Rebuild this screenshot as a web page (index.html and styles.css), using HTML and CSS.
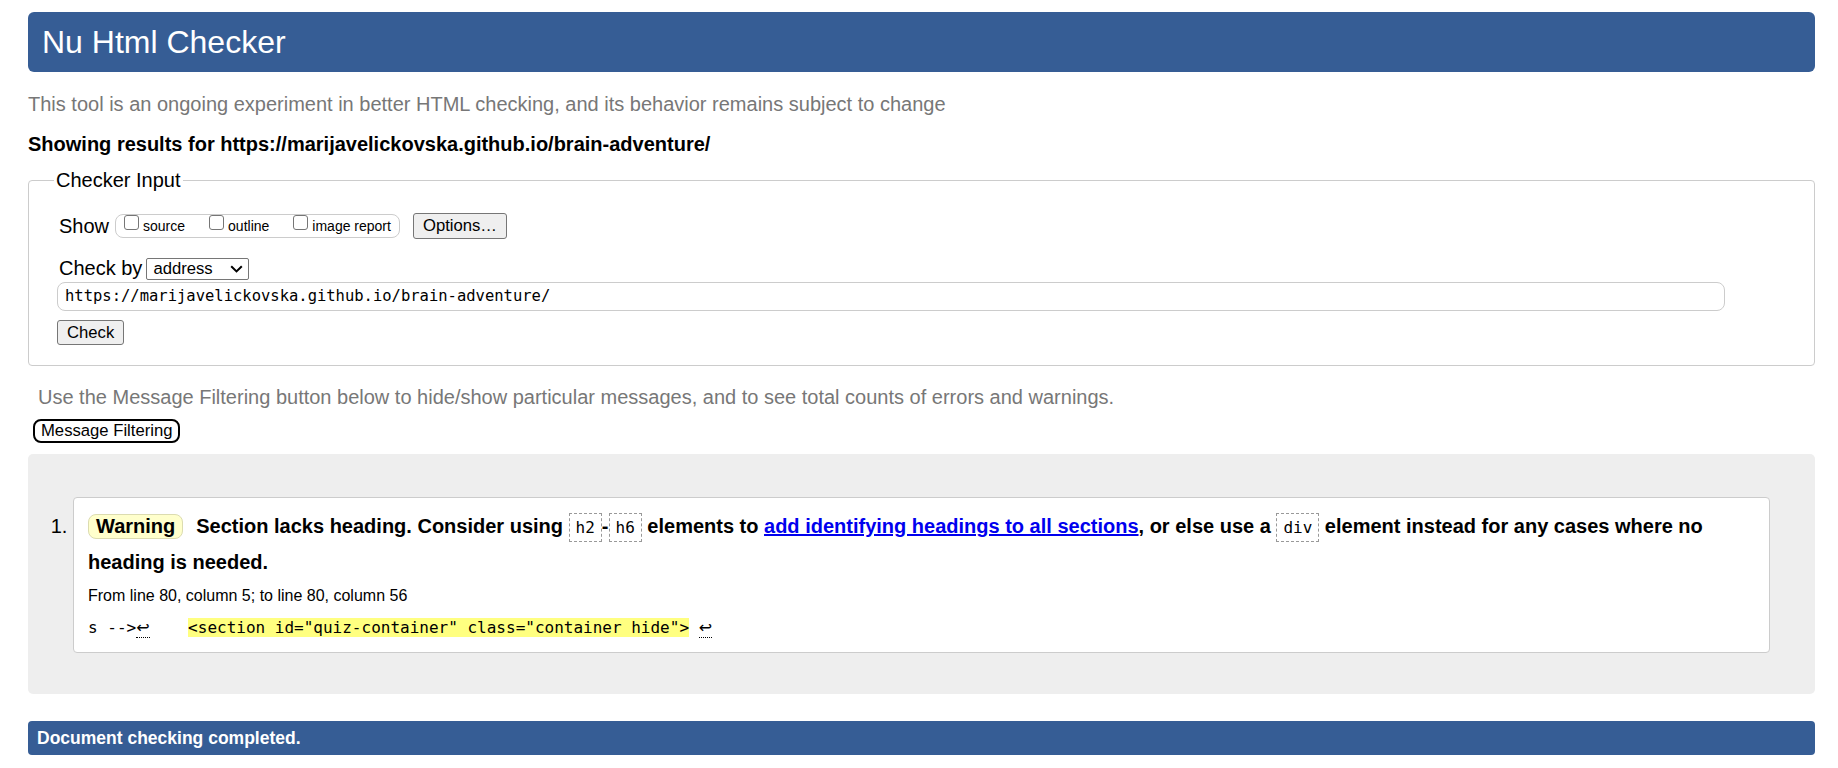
FILE: index.html
```html
<!DOCTYPE html>
<html lang="en">
<head>
<meta charset="utf-8">
<title>Showing results for https://marijavelickovska.github.io/brain-adventure/ - Nu Html Checker</title>
<link rel="stylesheet" href="styles.css">
</head>
<body>
<h1 class="title">Nu Html Checker</h1>
<p class="intro">This tool is an ongoing experiment in better HTML checking, and its behavior remains subject to change</p>
<p class="showing">Showing results for https://marijavelickovska.github.io/brain-adventure/</p>
<form class="checker">
  <fieldset class="input-set">
    <legend class="legend">Checker Input</legend>
    <div class="row show-row">
      <span class="label">Show</span>
      <span class="show-group"><label class="opt"><input type="checkbox" class="cb">source</label><label class="opt"><input type="checkbox" class="cb">outline</label><label class="opt"><input type="checkbox" class="cb">image report</label></span>
      <button type="button" class="btn options">Options…</button>
    </div>
    <div class="row checkby-row">
      <span class="label">Check by</span>
      <span class="select">address<svg class="chevron" width="13" height="8" viewBox="0 0 13 8"><path d="M1.2 1.2 L6.5 6.4 L11.8 1.2" fill="none" stroke="#000" stroke-width="2"/></svg></span>
    </div>
    <div class="url-row"><span class="url">https://marijavelickovska.github.io/brain-adventure/</span></div>
    <button type="button" class="btn check">Check</button>
  </fieldset>
</form>
<p class="filter-note">Use the Message Filtering button below to hide/show particular messages, and to see total counts of errors and warnings.</p>
<button type="button" class="filter-btn">Message Filtering</button>
<div class="results">
  <ol class="messages">
    <li class="message">
      <p class="message-text"><span class="badge">Warning</span><span class="msg">Section lacks heading. Consider using <code class="kw">h2</code>-<code class="kw">h6</code> elements to <a class="link" href="#">add identifying headings to all sections</a>, or else use a <code class="kw">div</code> element instead for any cases where no heading is needed.</span></p>
      <p class="location">From line 80, column 5; to line 80, column 56</p>
      <p class="extract">s --&gt;<span class="lf">↩</span>    <span class="hl">&lt;section id="quiz-container" class="container hide"&gt;</span> <span class="lf">↩</span></p>
    </li>
  </ol>
</div>
<p class="done">Document checking completed.</p>
</body>
</html>
```

FILE: styles.css
```css
html {
  background: #fff;
}

body {
  margin: 0;
  padding: 0 23px 40px 28px;
  font-family: "Liberation Sans", Arial, sans-serif;
  font-size: 20px;
  line-height: 23px;
  color: #000;
}

.title {
  margin: 12px 0 0;
  height: 60px;
  padding: 0 14px;
  background: #365d95;
  color: #fff;
  font-size: 32px;
  font-weight: normal;
  line-height: 60px;
  border-radius: 6px;
}

.intro {
  margin: 21px 0 0;
  color: #777;
}

.showing {
  margin: 17px 0 0;
  font-weight: bold;
}

.checker {
  margin: 0;
}

.input-set {
  margin: 13px 0 0;
  padding: 21px 28px 20px;
  border: 1px solid #ccc;
  border-radius: 4px;
  min-width: 0;
}

.legend {
  padding: 0 2px;
  margin-left: -3px;
  line-height: 23px;
}

.row {
  display: flex;
  align-items: center;
}

.show-row {
  height: 26px;
}

.label {
  margin-left: 2px;
}

.show-group {
  display: inline-block;
  margin-left: 6px;
  height: 24px;
  box-sizing: border-box;
  border: 1px solid #ccc;
  border-radius: 8px;
  padding: 0 8px 0 8px;
  font-size: 14px;
  line-height: 22px;
  white-space: nowrap;
}

.opt {
  margin-right: 24px;
}

.opt:last-child {
  margin-right: 0;
}

.cb {
  -webkit-appearance: none;
  appearance: none;
  width: 15px;
  height: 15px;
  margin: 0 4px 1px 0;
  box-sizing: border-box;
  border: 1px solid #767676;
  border-radius: 3px;
  background: #fff;
}

.btn {
  font-family: "Liberation Sans", Arial, sans-serif;
  font-size: 16.67px;
  color: #000;
  background: #efefef;
  border: 1px solid #767676;
  border-radius: 3px;
  padding: 0 9px;
  box-sizing: border-box;
}

.options {
  margin-left: 13px;
  height: 26px;
  line-height: 24px;
}

.checkby-row {
  margin-top: 18px;
  height: 23px;
}

.select {
  display: inline-flex;
  align-items: center;
  justify-content: space-between;
  margin-left: 4px;
  width: 103px;
  height: 22px;
  box-sizing: border-box;
  padding: 0 5px 0 6px;
  border: 1px solid #767676;
  border-radius: 2px;
  font-size: 16.67px;
}

.chevron {
  display: block;
  margin-top: 1px;
}

.url-row {
  margin-top: 2px;
}

.url {
  display: block;
  width: 96.5%;
  height: 29px;
  box-sizing: border-box;
  padding: 0 7px;
  border: 1px solid #ccc;
  border-radius: 8px;
  font-family: "DejaVu Sans Mono", "Liberation Mono", monospace;
  font-size: 15.5px;
  line-height: 27px;
}

.check {
  display: block;
  margin-top: 9px;
  height: 25px;
  line-height: 23px;
}

.filter-note {
  margin: 20px 0 0;
  padding-left: 10px;
  color: #777;
}

.filter-btn {
  display: block;
  margin: 10px 0 0 5px;
  height: 24px;
  padding: 0 6px;
  background: #fff;
  border: 2px solid #000;
  border-radius: 8px;
  font-family: "Liberation Sans", Arial, sans-serif;
  font-size: 16.67px;
  line-height: 20px;
  color: #000;
}

.results {
  margin-top: 11px;
  background: #eee;
  border-radius: 5px;
  padding: 43px 45px 41px;
}

.messages {
  margin: 0;
  padding: 0;
}

.message {
  background: #fff;
  border: 1px solid #ccc;
  border-radius: 4px;
  padding: 10px 14px 13px;
}

.message-text {
  margin: 0;
  line-height: 36px;
  font-weight: bold;
}

.badge {
  display: inline-block;
  line-height: 23px;
  padding: 0 7px;
  margin-right: 13px;
  background: #ffffcc;
  border: 1px solid #dcdcb0;
  border-radius: 8px;
}

.kw {
  display: inline-block;
  font-family: "DejaVu Sans Mono", "Liberation Mono", monospace;
  font-size: 16px;
  font-weight: normal;
  line-height: 27px;
  padding: 0 6px;
  border: 1px dashed #999;
}

.link {
  color: #0000ee;
  text-decoration: underline;
}

.location {
  margin: 4px 0 0;
  font-size: 16px;
  line-height: 23px;
}

.extract {
  margin: 10px 0 0;
  font-family: "DejaVu Sans Mono", "Liberation Mono", monospace;
  font-size: 16px;
  line-height: 22px;
  white-space: pre;
}

.lf {
  font-family: "DejaVu Sans", sans-serif;
  border-bottom: 1px dotted #000;
}

.hl {
  background: #ffff80;
}

.done {
  margin: 27px 0 0;
  height: 34px;
  padding: 0 9px;
  background: #365d95;
  color: #fff;
  border-radius: 4px;
  font-size: 17.5px;
  font-weight: bold;
  line-height: 34px;
}
```
